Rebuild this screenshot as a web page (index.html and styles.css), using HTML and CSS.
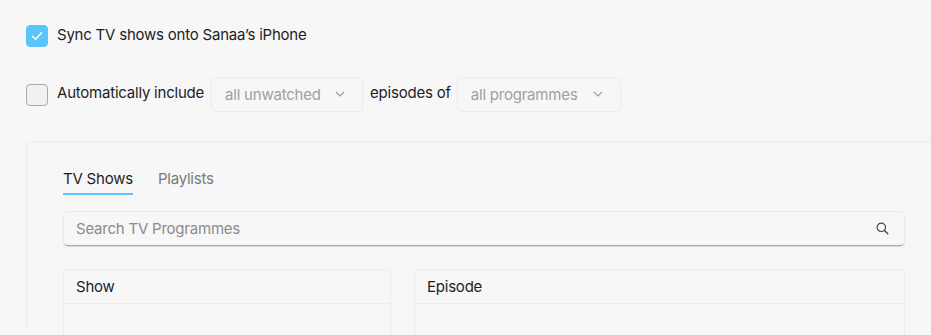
FILE: index.html
```html
<!DOCTYPE html>
<html lang="en">
<head>
  <meta charset="UTF-8" />
  <title>Sync TV</title>
  <link rel="stylesheet" href="styles.css">
</head>
<body>

  <!-- Opciones de sincronizacion -->
  <div class="opcion opcion-sync">
    <span class="check marcado">
      <svg width="12" height="10" viewBox="0 0 12 10"><path d="M1.5 5.2 L4.6 8.2 L10.5 1.8" fill="none" stroke="#fff" stroke-width="1.5" stroke-linecap="round" stroke-linejoin="round"/></svg>
    </span>
    <span class="etiqueta">Sync TV shows onto Sanaa’s iPhone</span>
  </div>

  <div class="opcion opcion-auto">
    <span class="check"></span>
    <span class="etiqueta">Automatically include</span>
    <div class="selector sel-episodios">
      <span>all unwatched</span>
      <svg width="10" height="6" viewBox="0 0 10 6"><path d="M1 1 L5 5 L9 1" fill="none" stroke="#9a9a9a" stroke-width="1.1"/></svg>
    </div>
    <span class="etiqueta">episodes of</span>
    <div class="selector sel-programas">
      <span>all programmes</span>
      <svg width="10" height="6" viewBox="0 0 10 6"><path d="M1 1 L5 5 L9 1" fill="none" stroke="#9a9a9a" stroke-width="1.1"/></svg>
    </div>
  </div>

  <!-- Panel -->
  <div class="panel">
    <div class="pestanas">
      <span class="pestana activa">TV Shows</span>
      <span class="pestana">Playlists</span>
    </div>

    <div class="buscador">
      <span>Search TV Programmes</span>
      <svg width="13" height="13" viewBox="0 0 13 13"><circle cx="5.3" cy="5.3" r="4.2" fill="none" stroke="#444" stroke-width="1.2"/><path d="M8.3 8.3 L11.8 11.8" stroke="#444" stroke-width="1.3" stroke-linecap="round"/></svg>
    </div>

    <div class="tablas">
      <div class="tabla tabla-show">
        <div class="cabecera">Show</div>
      </div>
      <div class="tabla tabla-episodio">
        <div class="cabecera">Episode</div>
      </div>
    </div>
  </div>

</body>
</html>
```

FILE: styles.css
```css
html {
  overflow: hidden;
}

body {
  background-color: #f7f7f7;
  color: #1d1d1f;
  font-family: 'Inter', 'Liberation Sans', sans-serif;
  font-size: 15px;
  letter-spacing: -0.22px;
  margin: 0;
  padding: 25px 0 0 26px;
  overflow: hidden;
  height: 310px;
}

.opcion {
  display: flex;
  align-items: center;
}

.opcion-sync {
  height: 22px;
}

.opcion-auto {
  margin-top: 30px;
  height: 35px;
}

.check {
  width: 20px;
  height: 20px;
  border: 1px solid #a9a9a9;
  border-radius: 4px;
  background-color: #f1f1f1;
  display: flex;
  align-items: center;
  justify-content: center;
  margin-right: 9px;
  flex-shrink: 0;
}

.check.marcado {
  background-color: #5ac5f8;
  border-color: #5ac5f8;
}

.etiqueta {
  padding-bottom: 4px;
}

.selector {
  border: 1px solid #ebebeb;
  border-radius: 5px;
  background-color: #f7f7f7;
  color: #a0a0a0;
  display: flex;
  align-items: center;
  justify-content: space-between;
  padding: 0 17px 1px 13px;
  box-sizing: border-box;
  height: 35px;
}

.sel-episodios {
  width: 152px;
  margin: 0 7px 0 7px;
}

.sel-programas {
  width: 164px;
  margin-left: 6px;
}

.panel {
  margin-top: 29px;
  border-top: 1px solid #ececec;
  border-left: 1px solid #ececec;
  border-top-left-radius: 7px;
  padding: 26px 26px 0 36px;
  height: 160px;
}

.pestanas {
  display: flex;
  gap: 25px;
  height: 27px;
}

.pestana {
  color: #7a7a7a;
  line-height: 22px;
}

.pestana.activa {
  color: #1d1d1f;
  border-bottom: 2px solid #5ac5f8;
  height: 25px;
}

.buscador {
  margin-top: 16px;
  width: 842px;
  height: 35px;
  box-sizing: border-box;
  border: 1px solid #ebebeb;
  border-bottom: 1px solid #a8a8a8;
  border-radius: 5px;
  box-shadow: 0 1px 1px rgba(0, 0, 0, 0.12);
  display: flex;
  align-items: center;
  justify-content: space-between;
  padding: 0 15px 0 12px;
  color: #8a8a8a;
}

.tablas {
  margin-top: 23px;
  display: flex;
  gap: 23px;
  width: 842px;
}

.tabla {
  border: 1px solid #ebebeb;
  border-bottom: none;
  border-radius: 5px 5px 0 0;
  height: 66px;
  box-sizing: border-box;
}

.tabla-show {
  width: 328px;
}

.tabla-episodio {
  flex: 1;
}

.cabecera {
  height: 33px;
  border-bottom: 1px solid #ebebeb;
  padding-left: 12px;
  line-height: 34px;
}
```
